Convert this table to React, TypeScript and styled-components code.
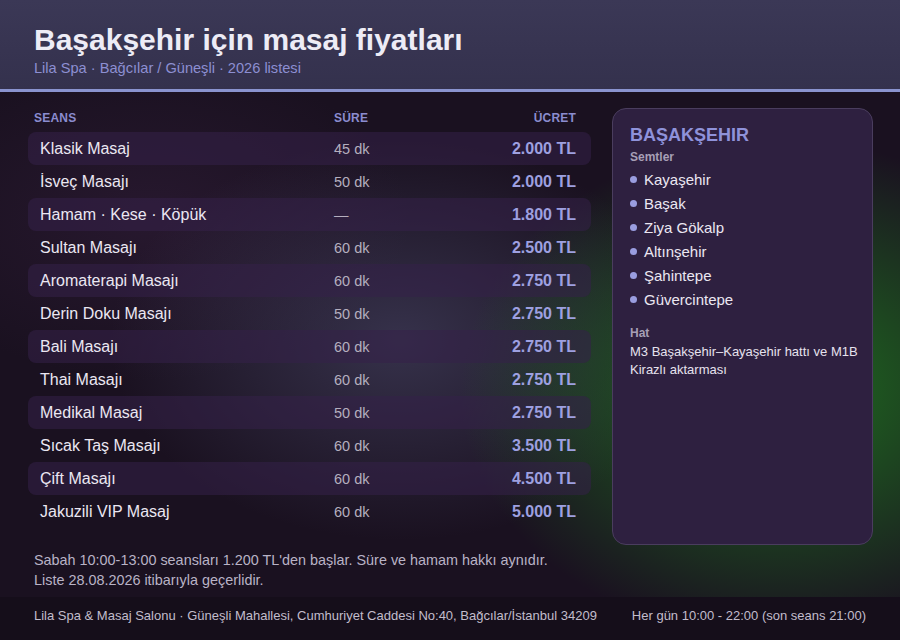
import React from "react";
import styled, { createGlobalStyle } from "styled-components";

const Global = createGlobalStyle`
  html, body { margin: 0; padding: 0; }
  *, *::before, *::after { box-sizing: border-box; }
  body {
    width: 900px;
    height: 640px;
    overflow: hidden;
    font-family: "Liberation Sans", Arial, sans-serif;
    background: #1a1120;
  }
`;

const Page = styled.div`
  width: 900px;
  height: 640px;
  display: flex;
  flex-direction: column;
  background:
    radial-gradient(ellipse 320px 250px at 780px 390px, rgba(32, 122, 32, 0.9), rgba(32, 122, 32, 0.4) 55%, rgba(32, 122, 32, 0) 100%),
    radial-gradient(ellipse 290px 200px at 400px 340px, rgba(82, 82, 118, 0.5), rgba(82, 82, 118, 0) 100%),
    radial-gradient(ellipse 260px 160px at 150px 220px, rgba(70, 40, 80, 0.3), rgba(70, 40, 80, 0) 100%),
    #1a1120;
`;

const Header = styled.header`
  height: 92px;
  padding: 22px 34px 0;
  background: linear-gradient(180deg, #3b3856 0%, #34314d 100%);
  border-bottom: 3px solid #8a93cf;
  flex: none;
`;

const Title = styled.h1`
  margin: 0;
  font-size: 30px;
  line-height: 36px;
  font-weight: 700;
  color: #edecf6;
`;

const Subtitle = styled.div`
  margin-top: 1px;
  font-size: 14.6px;
  line-height: 18px;
  color: #8d8fd2;
`;

const Main = styled.main`
  flex: 1;
  display: flex;
  gap: 21px;
  padding: 16px 27px 0 28px;
  min-height: 0;
`;

const TableCol = styled.section`
  width: 563px;
  display: flex;
  flex-direction: column;
`;

const Grid = styled.div`
  display: grid;
  grid-template-columns: 294px 1fr 110px;
  align-items: center;
`;

const HeadRow = styled(Grid)`
  height: 24px;
  padding: 0 15px 4px 6px;
`;

const HeadCell = styled.div<{ $right?: boolean; $shift?: number }>`
  font-size: 12px;
  font-weight: 700;
  letter-spacing: 0.2px;
  color: #8b8ccf;
  text-align: ${(p) => (p.$right ? "right" : "left")};
  padding-left: ${(p) => p.$shift ?? 0}px;
`;

const Row = styled(Grid)<{ $alt: boolean }>`
  height: 33px;
  padding: 0 15px 0 12px;
  border-radius: 8px;
  background: ${(p) => (p.$alt ? "rgba(52, 32, 72, 0.55)" : "transparent")};
`;

const Name = styled.div`
  font-size: 16px;
  color: #ebe7f2;
`;

const Dur = styled.div`
  font-size: 14.5px;
  color: #b5afbf;
`;

const Price = styled.div`
  font-size: 16px;
  font-weight: 700;
  color: #9ea0e0;
  text-align: right;
`;

const Panel = styled.aside`
  width: 261px;
  height: 437px;
  padding: 15px 8px 15px 17px;
  border: 1px solid #4a3d5e;
  border-radius: 14px;
  background: #2e2040;
`;

const PanelTitle = styled.div`
  font-size: 18px;
  line-height: 22px;
  font-weight: 700;
  color: #8f92da;
`;

const Label = styled.div<{ $top?: number }>`
  font-size: 12px;
  font-weight: 700;
  color: #a79fb6;
  margin-top: ${(p) => p.$top ?? 0}px;
  line-height: 16px;
`;

const List = styled.ul`
  list-style: none;
  margin: 2px 0 0;
  padding: 0;
`;

const Item = styled.li`
  display: flex;
  align-items: center;
  gap: 7px;
  height: 24px;
  font-size: 15px;
  color: #ebe7f2;
`;

const Dot = styled.span`
  width: 7px;
  height: 7px;
  border-radius: 50%;
  background: #9a9de0;
  flex: none;
`;

const HatText = styled.div`
  margin-top: 2px;
  font-size: 13px;
  line-height: 18px;
  color: #e6e2ee;
`;

const Notes = styled.div`
  padding: 9px 34px 0;
  font-size: 14.4px;
  line-height: 20px;
  color: #b9b3c6;
  height: 56px;
  flex: none;
`;

const Footer = styled.footer`
  height: 43px;
  flex: none;
  display: flex;
  align-items: center;
  justify-content: space-between;
  padding: 0 34px 6px;
  background: #150e1a;
  font-size: 13px;
  color: #c2bdcc;
`;

const rows: [string, string, string][] = [
  ["Klasik Masaj", "45 dk", "2.000 TL"],
  ["İsveç Masajı", "50 dk", "2.000 TL"],
  ["Hamam · Kese · Köpük", "—", "1.800 TL"],
  ["Sultan Masajı", "60 dk", "2.500 TL"],
  ["Aromaterapi Masajı", "60 dk", "2.750 TL"],
  ["Derin Doku Masajı", "50 dk", "2.750 TL"],
  ["Bali Masajı", "60 dk", "2.750 TL"],
  ["Thai Masajı", "60 dk", "2.750 TL"],
  ["Medikal Masaj", "50 dk", "2.750 TL"],
  ["Sıcak Taş Masajı", "60 dk", "3.500 TL"],
  ["Çift Masajı", "60 dk", "4.500 TL"],
  ["Jakuzili VIP Masaj", "60 dk", "5.000 TL"],
];

const semtler = ["Kayaşehir", "Başak", "Ziya Gökalp", "Altınşehir", "Şahintepe", "Güvercintepe"];

export default function App() {
  return (
    <Page>
      <Global />
      <Header>
        <Title>Başakşehir için masaj fiyatları</Title>
        <Subtitle>Lila Spa · Bağcılar / Güneşli · 2026 listesi</Subtitle>
      </Header>
      <Main>
        <TableCol>
          <HeadRow>
            <HeadCell>SEANS</HeadCell>
            <HeadCell $shift={6}>SÜRE</HeadCell>
            <HeadCell $right>ÜCRET</HeadCell>
          </HeadRow>
          {rows.map(([n, d, p], i) => (
            <Row key={n} $alt={i % 2 === 0}>
              <Name>{n}</Name>
              <Dur>{d}</Dur>
              <Price>{p}</Price>
            </Row>
          ))}
        </TableCol>
        <Panel>
          <PanelTitle>BAŞAKŞEHIR</PanelTitle>
          <Label $top={3}>Semtler</Label>
          <List>
            {semtler.map((s) => (
              <Item key={s}>
                <Dot />
                {s}
              </Item>
            ))}
          </List>
          <Label $top={14}>Hat</Label>
          <HatText>M3 Başakşehir–Kayaşehir hattı ve M1B Kirazlı aktarması</HatText>
        </Panel>
      </Main>
      <Notes>
        Sabah 10:00-13:00 seansları 1.200 TL'den başlar. Süre ve hamam hakkı aynıdır.
        <br />
        Liste 28.08.2026 itibarıyla geçerlidir.
      </Notes>
      <Footer>
        <span>Lila Spa &amp; Masaj Salonu · Güneşli Mahallesi, Cumhuriyet Caddesi No:40, Bağcılar/İstanbul 34209</span>
        <span>Her gün 10:00 - 22:00 (son seans 21:00)</span>
      </Footer>
    </Page>
  );
}
